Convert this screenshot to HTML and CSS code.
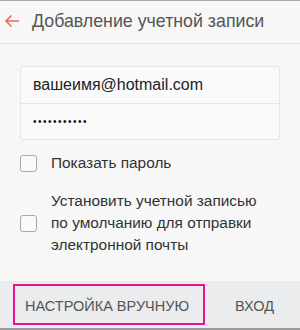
FILE: index.html
```html
<!DOCTYPE html>
<html lang="ru">
<head>
<meta charset="utf-8">
<link rel="stylesheet" href="styles.css">
</head>
<body>
<div class="screen">
  <header class="header">
    <svg class="back" width="16" height="14" viewBox="0 0 16 14"><path d="M15 7H2M7.5 1.5 2 7l5.5 5.5" fill="none" stroke="#ef6a55" stroke-width="1.6"/></svg>
    <h1 class="title">Добавление учетной записи</h1>
  </header>
  <main class="content">
    <div class="fields">
      <div class="field">вашеимя@hotmail.com</div>
      <div class="field pass">•••••••••••</div>
    </div>
    <label class="check one">
      <span class="box"></span>
      <span class="label">Показать пароль</span>
    </label>
    <label class="check two">
      <span class="box"></span>
      <span class="label">Установить учетной записью<br>по умолчанию для отправки<br>электронной почты</span>
    </label>
  </main>
  <footer class="footer">
    <span class="btn manual">НАСТРОЙКА ВРУЧНУЮ</span>
    <span class="btn login">ВХОД</span>
  </footer>
</div>
</body>
</html>
```
FILE: styles.css
```css
* { box-sizing: border-box; margin: 0; padding: 0; }
html, body { width: 300px; height: 330px; overflow: hidden; }
body { font-family: "Liberation Sans", Arial, sans-serif; background: #f7f7f7; }
.screen { display: flex; flex-direction: column; height: 330px; border-top: 1px solid #a8a8a8; border-bottom: 2px solid #9a9a9a; }
.header { height: 43px; display: flex; align-items: center; border-bottom: 1px solid #e2e2e2; background: #f7f7f7; }
.back { margin-left: 4px; margin-top: -3px; }
.title { font-weight: 400; font-size: 17.8px; color: #555; margin-left: 12px; margin-top: -2px; }
.content { flex: 1; padding: 22px 20px 0 20px; background: #f7f7f7; }
.fields { border: 1px solid #e6e6e6; border-radius: 3px; background: #fafafa; }
.field { height: 36px; display: flex; align-items: center; padding-left: 12px; font-size: 16px; color: #222; }
.field + .field { border-top: 1px solid #e6e6e6; }
.pass { font-size: 10px; letter-spacing: 1.5px; padding-bottom: 1px; color: #111; }
.check { display: flex; align-items: center; }
.check.one { margin-top: 12px; }
.check.two { margin-top: 16px; }
.box { width: 17px; height: 17px; border: 1px solid #a9a9a9; border-radius: 3px; background: #fafafa; flex-shrink: 0; }
.label { margin-left: 14px; font-size: 15.4px; line-height: 22px; color: #333; }
.footer { height: 47px; background: #eaecee; display: flex; align-items: center; padding-left: 13px; }
.btn { font-size: 14.5px; color: #555; }
.manual { border: 2px solid #e5158f; height: 41px; width: 192px; display: flex; align-items: center; padding-left: 10px; padding-top: 2px; }
.login { margin-left: 30px; padding-top: 2px; }
```
